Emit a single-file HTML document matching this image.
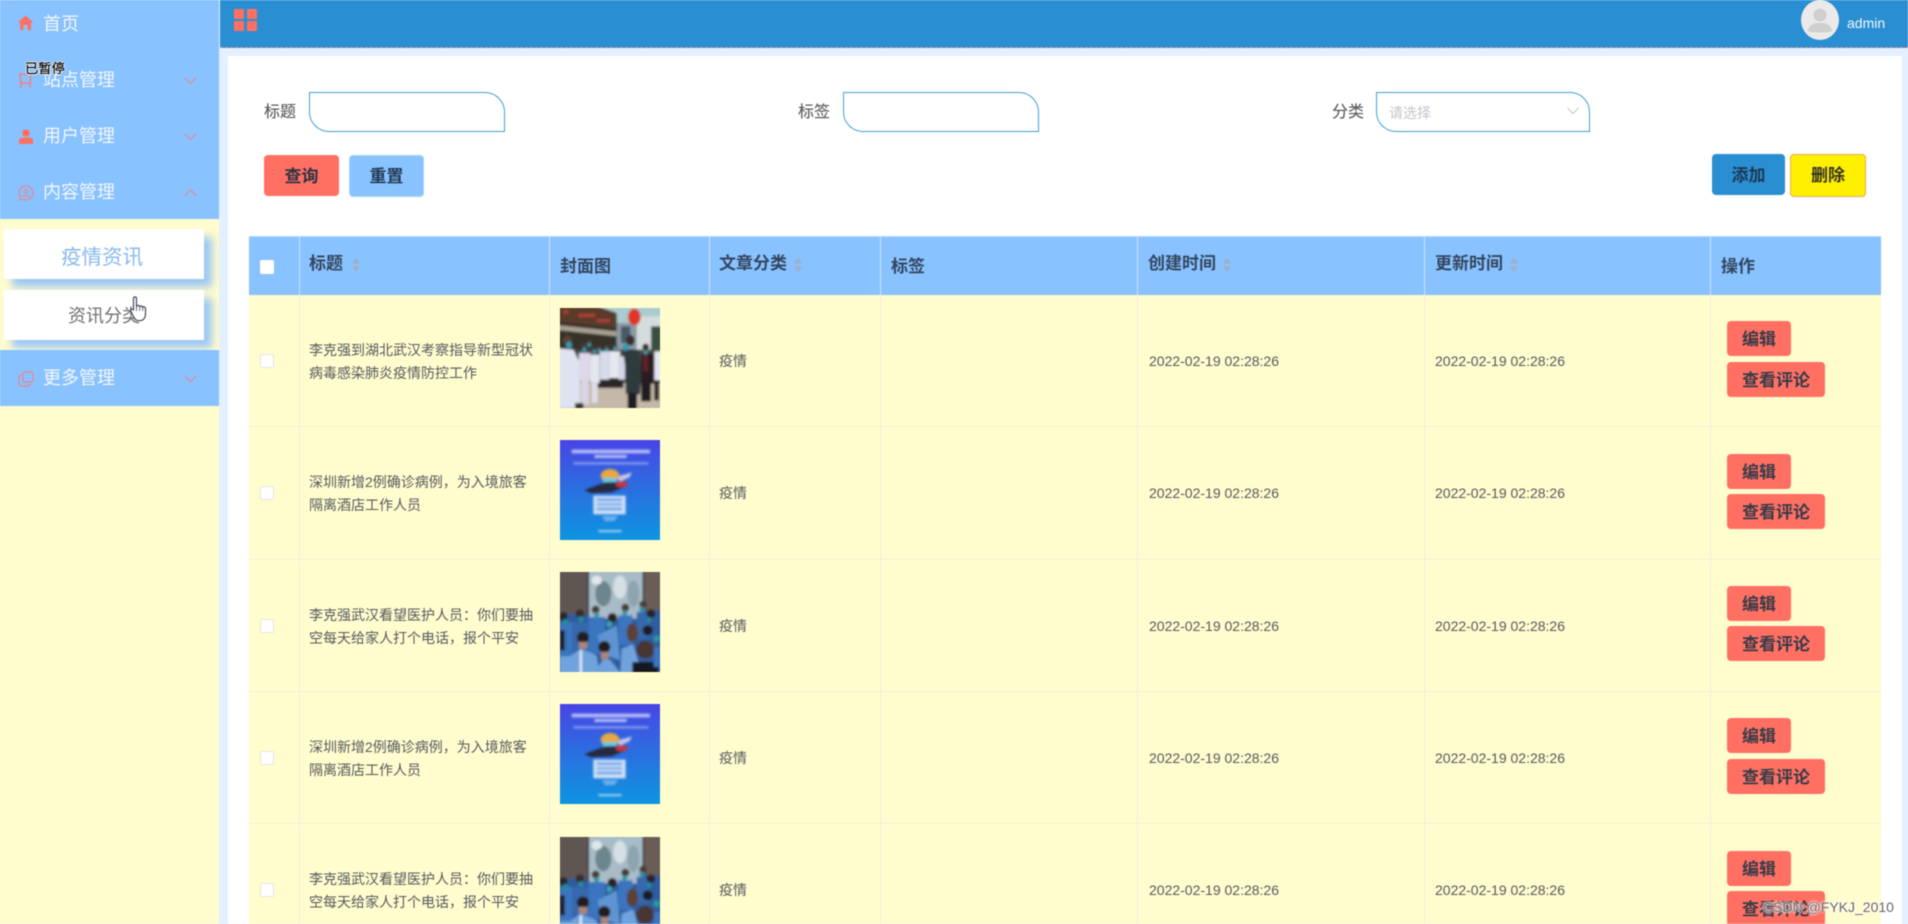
<!DOCTYPE html>
<html lang="zh-CN">
<head>
<meta charset="utf-8">
<title>内容管理</title>
<style>
html,body{margin:0;padding:0;width:1908px;height:924px;overflow:hidden;background:#e3f0ff}
*{box-sizing:border-box}
body{font-family:"Liberation Sans","Noto Sans CJK SC",sans-serif;color:#606266}
#root{position:absolute;left:0;top:0;width:1908px;height:924px;overflow:hidden;filter:blur(.4px)}
.a{position:absolute;white-space:nowrap}
#side{left:0;top:0;width:219px;height:924px;background:#fffcce}
.m{position:absolute;left:0;width:219px;height:56px;background:#88c2ff;color:#f4f7fb;font-size:18px;line-height:56px;padding-left:43px}
.m svg{position:absolute}
.sub{position:absolute;left:4px;width:200px;height:50px;background:#fff;text-align:center;box-shadow:8px 8px 8px #9cc7f5}
#head{left:220px;top:0;width:1688px;height:48px;background:#2a8fd2;border-bottom:1px dashed #c98a92}
#main{left:228px;top:56px;width:1674px;height:868px;background:#fff}
.lb{font-size:16px;line-height:24px;color:#54575c;-webkit-text-stroke:.1px #54575c}
.in{position:absolute;top:92px;height:40px;background:#fff;border:1.3px solid #3f9fd6;border-radius:0 20px 0 20px}
.btn{position:absolute;font-size:17px;font-weight:700;color:#2c3442;text-align:center;border-radius:4px}
.th{position:absolute;top:0;font-size:17px;font-weight:700;color:#344660;white-space:nowrap}
.row{position:absolute;left:0;width:1632px;height:132.3px;border-bottom:1px solid #f0efdc}
.row .c{position:absolute;font-size:14px;line-height:23px;color:#565a5e;white-space:nowrap}
.row svg{position:absolute;left:311px;top:12.6px}
.vl{position:absolute;top:0;width:1px;height:700px;background:#f0efdc}
.hl{position:absolute;top:0;width:1px;height:59px;background:#cfe3f7}
.ck{position:absolute;left:11px;width:14px;height:14px;background:#fff;border:1px solid #e4e6e0;border-radius:2px}
.e,.v{position:absolute;left:1478px;height:35px;background:#ff7063;border-radius:4px;font-size:17px;font-weight:700;color:#373b48;text-align:center;line-height:37px}
.e{top:26.4px;width:64px}
.v{top:66.7px;width:98px}
</style>
</head>
<body>
<svg width="0" height="0" style="position:absolute">
<defs>
<filter id="b" x="-10%" y="-10%" width="120%" height="120%"><feGaussianBlur stdDeviation="3.5"/></filter>
<linearGradient id="g2" x1="0" y1="0" x2="0" y2="1"><stop offset="0" stop-color="#4c40e6"/><stop offset=".5" stop-color="#2a70e0"/><stop offset="1" stop-color="#0a98e0"/></linearGradient>

<symbol id="i1" viewBox="15 15 300 300">
<g filter="url(#b)">
<rect x="0" y="0" width="330" height="330" fill="#c4b8a8"/>
<rect x="0" y="0" width="330" height="60" fill="#a8ccd0"/>
<rect x="240" y="40" width="90" height="100" fill="#d5dcdc"/>
<rect x="288" y="70" width="40" height="75" fill="#3a5040"/>
<rect x="185" y="60" width="60" height="85" fill="#8a9aa6"/>
<rect x="198" y="70" width="28" height="50" fill="#4a5a66"/>
<polygon points="0,0 185,38 185,145 0,145" fill="#35302a"/>
<polygon points="0,0 100,0 185,30 185,75 0,55" fill="#5a3a2a"/>
<rect x="25" y="22" width="15" height="10" fill="#b04038"/><rect x="70" y="32" width="50" height="10" fill="#b04038"/><rect x="125" y="48" width="40" height="10" fill="#a84038"/>
<polygon points="0,65 185,85 185,100 0,80" fill="#a8a090"/>
<ellipse cx="238" cy="42" rx="19" ry="25" fill="#e0352c"/>
<rect x="0" y="140" width="330" height="100" fill="#4a4844"/>
<rect x="125" y="225" width="80" height="30" fill="#2a2826"/>
<polygon points="0,135 55,140 75,180 75,300 60,315 0,315" fill="#dde3f0"/>
<rect x="72" y="150" width="34" height="85" fill="#dcd8e8"/><rect x="78" y="230" width="24" height="75" fill="#d8d4e2"/>
<rect x="106" y="155" width="28" height="85" fill="#e4e6f0"/><rect x="110" y="235" width="18" height="65" fill="#dcdce8"/>
<rect x="135" y="145" width="28" height="85" fill="#d6dcea"/>
<rect x="163" y="145" width="32" height="80" fill="#e6e8f0"/>
<rect x="190" y="160" width="20" height="70" fill="#d2d8e8"/>
<rect x="60" y="300" width="25" height="20" fill="#3a3532"/>
<circle cx="37" cy="112" r="14" fill="#5a4238"/><ellipse cx="42" cy="126" rx="9" ry="10" fill="#2f9db2"/>
<circle cx="88" cy="128" r="10" fill="#4a3a30"/><ellipse cx="88" cy="140" rx="6" ry="7" fill="#2f9db2"/>
<circle cx="103" cy="118" r="8" fill="#4a3a30"/><ellipse cx="103" cy="126" rx="5" ry="6" fill="#2f9db2"/>
<circle cx="118" cy="138" r="8" fill="#4a3a30"/><ellipse cx="118" cy="146" rx="5" ry="6" fill="#2f9db2"/>
<circle cx="133" cy="135" r="7" fill="#4a3a30"/><ellipse cx="133" cy="142" rx="5" ry="5" fill="#2f9db2"/>
<circle cx="155" cy="133" r="7" fill="#4a3a30"/><ellipse cx="155" cy="140" rx="5" ry="5" fill="#2f9db2"/>
<circle cx="180" cy="130" r="7" fill="#4a3a30"/><ellipse cx="180" cy="136" rx="5" ry="5" fill="#2f9db2"/>
<polygon points="205,150 225,138 250,142 260,200 255,275 212,272 212,200" fill="#2e3a3e"/>
<rect x="218" y="270" width="28" height="50" fill="#1c1a20"/>
<ellipse cx="226" cy="112" rx="13" ry="16" fill="#3a2e2a"/><ellipse cx="212" cy="132" rx="10" ry="10" fill="#2f9db2"/>
<rect x="258" y="152" width="40" height="90" fill="#2c1c20"/><rect x="264" y="155" width="16" height="50" fill="#5c2028"/>
<rect x="258" y="235" width="30" height="60" fill="#201c20"/>
<circle cx="272" cy="132" r="10" fill="#3a2e2a"/><ellipse cx="272" cy="148" rx="7" ry="6" fill="#2f9db2"/>
<rect x="298" y="145" width="30" height="88" fill="#e4e8f0"/><rect x="298" y="232" width="14" height="60" fill="#2a2220"/>
</g>
</symbol>

<symbol id="i2" viewBox="15 15 300 300">
<rect x="0" y="0" width="330" height="330" fill="url(#g2)"/>
<g filter="url(#b)">
<rect x="50" y="44" width="235" height="11" fill="#c8d0fa" opacity=".85"/>
<rect x="118" y="60" width="97" height="9" fill="#c8d0fa" opacity=".85"/>
<rect x="55" y="82" width="225" height="6" fill="#9eb0f6" opacity=".85"/>
<polygon points="185,125 232,112 222,128 195,140" fill="#c8c4e6"/>
<ellipse cx="165" cy="122" rx="28" ry="20" fill="#e8a840"/>
<rect x="143" y="128" width="42" height="14" rx="5" fill="#6fc8d8"/>
<polygon points="88,165 150,142 215,140 218,152 170,172 110,175" fill="#252a40"/>
<ellipse cx="200" cy="148" rx="18" ry="9" fill="#c8343c"/>
<rect x="115" y="182" width="97" height="56" fill="#cfe0f8"/>
<rect x="125" y="190" width="76" height="8" fill="#6fa4e8"/><rect x="125" y="204" width="76" height="8" fill="#7eaeea"/><rect x="125" y="218" width="76" height="8" fill="#6fa4e8"/>
<rect x="143" y="245" width="44" height="4" fill="#b4d4f6"/>
<rect x="148" y="253" width="32" height="4" fill="#b4d4f6"/>
<rect x="130" y="286" width="70" height="5" fill="#bfe0f8"/>
</g>
</symbol>

<symbol id="i3" viewBox="15 15 300 300">
<g filter="url(#b)">
<rect x="0" y="0" width="330" height="330" fill="#2f5d9e"/>
<rect x="0" y="0" width="102" height="140" fill="#5f5452"/>
<rect x="262" y="0" width="70" height="130" fill="#6a5c56"/>
<rect x="100" y="0" width="165" height="155" fill="#a8bcc8"/>
<rect x="98" y="0" width="4" height="150" fill="#1c1c1c"/><rect x="263" y="0" width="4" height="130" fill="#1c1c1c"/>
<ellipse cx="145" cy="80" rx="24" ry="38" fill="#6d858c"/>
<ellipse cx="195" cy="60" rx="20" ry="35" fill="#d4e0e4"/>
<ellipse cx="235" cy="80" rx="18" ry="40" fill="#8ea4ae"/>
<ellipse cx="125" cy="40" rx="16" ry="14" fill="#dfe8ec"/>
<rect x="15" y="165" width="40" height="110" fill="#3a74c0"/>
<rect x="52" y="165" width="46" height="100" fill="#3567ac"/>
<rect x="100" y="150" width="50" height="110" fill="#3a74c0"/>
<polygon points="128,205 185,175 195,280 140,260" fill="#5f94d2"/>
<rect x="190" y="145" width="42" height="90" fill="#3a74c0"/>
<rect x="245" y="135" width="40" height="80" fill="#3567ac"/>
<rect x="285" y="160" width="45" height="100" fill="#2f5d9e"/>
<circle cx="25" cy="148" r="13" fill="#2e2624"/><ellipse cx="32" cy="165" rx="9" ry="9" fill="#1f8f9a"/>
<circle cx="75" cy="140" r="13" fill="#3a2c26"/><ellipse cx="78" cy="156" rx="8" ry="8" fill="#1f8f9a"/>
<circle cx="122" cy="128" r="12" fill="#4a3a34"/><ellipse cx="125" cy="143" rx="8" ry="8" fill="#2a9aa4"/>
<circle cx="172" cy="152" r="14" fill="#2a2220"/><ellipse cx="163" cy="171" rx="8" ry="9" fill="#39a7b4"/>
<circle cx="211" cy="122" r="12" fill="#4a3a34"/><ellipse cx="209" cy="138" rx="8" ry="8" fill="#2a9aa4"/>
<circle cx="264" cy="112" r="11" fill="#4a3a34"/><ellipse cx="260" cy="127" rx="8" ry="8" fill="#2a9aa4"/>
<circle cx="288" cy="140" r="13" fill="#2a2220"/><ellipse cx="282" cy="158" rx="7" ry="7" fill="#1f8f9a"/>
<circle cx="305" cy="215" r="10" fill="#2a9aa4"/>
<rect x="15" y="190" width="14" height="60" fill="#241e1c"/>
<rect x="15" y="268" width="36" height="52" fill="#6fa3de"/>
<polygon points="48,265 78,245 125,265 132,320 45,320" fill="#6fa3de"/>
<rect x="74" y="250" width="7" height="70" fill="#e4edf8"/>
<circle cx="84" cy="212" r="18" fill="#241e1c"/><rect x="72" y="225" width="25" height="20" fill="#ac8676"/>
<polygon points="112,320 145,278 165,278 198,320" fill="#6fa3de"/>
<circle cx="148" cy="240" r="18" fill="#241e1c"/><rect x="138" y="255" width="22" height="22" fill="#ac8676"/>
<polygon points="196,320 200,245 235,232 250,285 235,320" fill="#6fa3de"/>
<ellipse cx="232" cy="197" rx="17" ry="28" fill="#5a4238"/>
<circle cx="278" cy="190" r="15" fill="#1e1c24"/>
<circle cx="271" cy="248" r="27" fill="#4a3630"/>
<rect x="232" y="285" width="78" height="35" fill="#17161e"/>
<rect x="296" y="240" width="20" height="60" fill="#3a74c0"/>
</g>
</symbol>

<symbol id="caret" viewBox="0 0 8 14">
<polygon points="4,0 8,5.5 0,5.5" fill="#a0afc4"/><polygon points="4,14 8,8.5 0,8.5" fill="#a0afc4"/>
</symbol>
</defs>
</svg>
<div id="root">

<div class="a" id="head">
  <svg style="position:absolute;left:14px;top:9px" width="23" height="22"><g fill="#ff7063"><rect width="10" height="10" rx="1"/><rect x="13" width="10" height="10" rx="1"/><rect y="12" width="10" height="10" rx="1"/><rect x="13" y="12" width="10" height="10" rx="1"/></g></svg>
  <svg style="position:absolute;left:1581px;top:0" width="38" height="40"><ellipse cx="19" cy="20" rx="19" ry="20" fill="#eaeaea"/><circle cx="19" cy="15" r="6.500" fill="#cfcfcf"/><path d="M7 31c1-7 7-8 12-8s11 1 12 8c-3 2-21 2-24 0z" fill="#cfcfcf"/></svg>
  <div class="a" style="left:1627px;top:15px;font-size:14px;line-height:17px;color:#f2f8fc">admin</div>
</div>

<div class="a" id="main"></div>

<div class="a" id="side">
  <div class="m" style="top:-4px">首页<svg style="left:18px;top:19px" width="15" height="15" viewBox="0 0 15 15"><path d="M7.500 .5L15 7.500h-2V15H9.500v-5h-4v5H2V7.500H0z" fill="#ff7063"/></svg></div>
  <div class="m" style="top:52px">站点管理<svg style="left:18px;top:21px" width="15" height="17" viewBox="0 0 15 17"><path d="M1 1h13M2.500 1v9h10V1M4 10l-1.500 5M11 10l1.500 5" fill="none" stroke="#f0808a" stroke-width="1.500"/></svg><svg style="left:184px;top:25px" width="13" height="8"><path d="M.5.500l6 6 6-6" fill="none" stroke="#f07f86" stroke-width="1"/></svg></div>
  <div class="m" style="top:108px">用户管理<svg style="left:19px;top:21px" width="14" height="15" viewBox="0 0 14 15"><circle cx="7" cy="4" r="3.800" fill="#ff7063"/><path d="M0 15v-3c0-3 2-3.500 7-3.500s7 .5 7 3.500v3z" fill="#ff7063"/></svg><svg style="left:184px;top:25px" width="13" height="8"><path d="M.5.500l6 6 6-6" fill="none" stroke="#f07f86" stroke-width="1"/></svg></div>
  <div class="m" style="top:164px;height:55px">内容管理<svg style="left:18px;top:21px" width="16" height="16" viewBox="0 0 16 16"><path d="M8 1a7 7 0 1 1-3 13.300L1.500 15l.8-3A7 7 0 0 1 8 1z" fill="none" stroke="#f0808a" stroke-width="1.100"/><circle cx="8" cy="6.500" r="1.800" fill="none" stroke="#f0808a"/><path d="M4.500 11h7" stroke="#f0808a" stroke-width="1.200"/></svg><svg style="left:184px;top:25px" width="13" height="8"><path d="M.5 7l6-6 6 6" fill="none" stroke="#f07f86" stroke-width="1"/></svg></div>
  <div class="sub" style="top:229px;font-size:20.500px;line-height:57px;color:#88b9ee"><span style="position:relative;left:-2px">疫情资讯</span></div>
  <div class="sub" style="top:290px;font-size:18px;line-height:52px;color:#6e7074">资讯分类</div>
  <div class="m" style="top:350px">更多管理<svg style="left:18px;top:21px" width="16" height="16" viewBox="0 0 16 16"><rect x="5" y="1" width="10" height="10" rx="2" fill="none" stroke="#f0808a" stroke-width="1.200"/><path d="M3.500 4H3a2 2 0 0 0-2 2v7a2 2 0 0 0 2 2h7a2 2 0 0 0 2-2v-.5" fill="none" stroke="#f0808a" stroke-width="1.200"/></svg><svg style="left:184px;top:25px" width="13" height="8"><path d="M.5.500l6 6 6-6" fill="none" stroke="#f07f86" stroke-width="1"/></svg></div>
</div>

<div class="a" style="left:25px;top:60px;font-size:13.300px;line-height:17px;color:#000;-webkit-text-stroke:.25px #000;text-shadow:1px 0 #fff,-1px 0 #fff,0 1px #fff,0 -1px #fff">已暂停</div>

<svg class="a" style="left:130px;top:296px" width="17" height="26" viewBox="0 0 17 26"><path d="M3.500 2.500c0-2 3-2 3 0v8c.5-1.500 3-1.500 3.200.3.500-1.300 2.800-1.100 3 .7.600-1 2.800-.8 2.800 1.200v5c0 4-2 7-6 7-3 0-4.500-1-6-4L.8 15c-.8-1.500 1-2.800 2.700-1z" fill="#fff" stroke="#444b55" stroke-width="1.200" stroke-linejoin="round"/><path d="M6.500 10v5M9.700 11v4M12.700 12v3" stroke="#444b55" stroke-width=".8"/></svg>

<div class="a lb" style="left:264px;top:101px">标题</div>
<div class="in" style="left:309px;width:196px"></div>
<div class="a lb" style="left:798px;top:101px">标签</div>
<div class="in" style="left:843px;width:196px"></div>
<div class="a lb" style="left:1332px;top:101px">分类</div>
<div class="in" style="left:1376px;width:214px"></div>
<div class="a" style="left:1389px;top:101px;font-size:14px;line-height:24px;color:#c0c4cc">请选择</div>
<svg class="a" style="left:1567px;top:107px" width="12" height="8"><path d="M.5 1l5.500 5.500L11.500 1" fill="none" stroke="#c0c4cc" stroke-width="1"/></svg>

<div class="btn" style="left:264px;top:155px;width:75px;height:41px;line-height:43px;background:#ff7063">查询</div>
<div class="btn" style="left:349px;top:155px;width:75px;height:42px;line-height:42px;background:#88c2ff;border:1px solid #a8d0fa;color:#243a56">重置</div>
<div class="btn" style="left:1712px;top:154px;width:73px;height:41px;line-height:43px;background:#2a8fd2;color:#1d3854">添加</div>
<div class="btn" style="left:1790px;top:154px;width:76px;height:43px;line-height:42px;background:#fff000;border:1px solid #e8a850;color:#33332a">删除</div>

<div class="a" style="left:249px;top:236px;width:1632px;height:700px;background:#fffcce">
  <div class="a" style="left:0;top:0;width:1632px;height:59px;background:#88c2ff;border-top:1px solid #b5d8fb"></div>
  <div class="vl" style="left:50px"></div><div class="vl" style="left:300px"></div><div class="vl" style="left:460px"></div><div class="vl" style="left:631px"></div><div class="vl" style="left:888px"></div><div class="vl" style="left:1175px"></div><div class="vl" style="left:1461px"></div>
  <div class="hl" style="left:50px"></div><div class="hl" style="left:300px"></div><div class="hl" style="left:460px"></div><div class="hl" style="left:631px"></div><div class="hl" style="left:888px"></div><div class="hl" style="left:1175px"></div><div class="hl" style="left:1461px"></div>
  <div class="a" style="left:11px;top:24px;width:14px;height:14px;background:#fff;border-radius:2px"></div>

  <div class="th" style="left:60px;top:16px;line-height:24px">标题<svg style="position:absolute;left:43px;top:6px" width="8" height="14"><use href="#caret"/></svg></div>
  <div class="th" style="left:311px;top:19px;line-height:24px">封面图</div>
  <div class="th" style="left:470px;top:16px;line-height:24px">文章分类<svg style="position:absolute;left:75px;top:6px" width="8" height="14"><use href="#caret"/></svg></div>
  <div class="th" style="left:642px;top:19px;line-height:24px">标签</div>
  <div class="th" style="left:899px;top:16px;line-height:24px">创建时间<svg style="position:absolute;left:75px;top:6px" width="8" height="14"><use href="#caret"/></svg></div>
  <div class="th" style="left:1186px;top:16px;line-height:24px">更新时间<svg style="position:absolute;left:75px;top:6px" width="8" height="14"><use href="#caret"/></svg></div>
  <div class="th" style="left:1472px;top:19px;line-height:24px">操作</div>

  <div class="row" style="top:59px">
    <div class="ck" style="top:59px"></div>
    <div class="c" style="left:60px;top:44px">李克强到湖北武汉考察指导新型冠状<br>病毒感染肺炎疫情防控工作</div>
    <svg width="100" height="100"><use href="#i1"/></svg>
    <div class="c" style="left:470px;top:55px">疫情</div>
    <div class="c" style="left:900px;top:55px">2022-02-19 02:28:26</div>
    <div class="c" style="left:1186px;top:55px">2022-02-19 02:28:26</div>
    <div class="e">编辑</div><div class="v">查看评论</div>
  </div>
  <div class="row" style="top:191.300px">
    <div class="ck" style="top:59px"></div>
    <div class="c" style="left:60px;top:44px">深圳新增2例确诊病例，为入境旅客<br>隔离酒店工作人员</div>
    <svg width="100" height="100"><use href="#i2"/></svg>
    <div class="c" style="left:470px;top:55px">疫情</div>
    <div class="c" style="left:900px;top:55px">2022-02-19 02:28:26</div>
    <div class="c" style="left:1186px;top:55px">2022-02-19 02:28:26</div>
    <div class="e">编辑</div><div class="v">查看评论</div>
  </div>
  <div class="row" style="top:323.600px">
    <div class="ck" style="top:59px"></div>
    <div class="c" style="left:60px;top:44px">李克强武汉看望医护人员：你们要抽<br>空每天给家人打个电话，报个平安</div>
    <svg width="100" height="100"><use href="#i3"/></svg>
    <div class="c" style="left:470px;top:55px">疫情</div>
    <div class="c" style="left:900px;top:55px">2022-02-19 02:28:26</div>
    <div class="c" style="left:1186px;top:55px">2022-02-19 02:28:26</div>
    <div class="e">编辑</div><div class="v">查看评论</div>
  </div>
  <div class="row" style="top:455.900px">
    <div class="ck" style="top:59px"></div>
    <div class="c" style="left:60px;top:44px">深圳新增2例确诊病例，为入境旅客<br>隔离酒店工作人员</div>
    <svg width="100" height="100"><use href="#i2"/></svg>
    <div class="c" style="left:470px;top:55px">疫情</div>
    <div class="c" style="left:900px;top:55px">2022-02-19 02:28:26</div>
    <div class="c" style="left:1186px;top:55px">2022-02-19 02:28:26</div>
    <div class="e">编辑</div><div class="v">查看评论</div>
  </div>
  <div class="row" style="top:588.200px">
    <div class="ck" style="top:59px"></div>
    <div class="c" style="left:60px;top:44px">李克强武汉看望医护人员：你们要抽<br>空每天给家人打个电话，报个平安</div>
    <svg width="100" height="100"><use href="#i3"/></svg>
    <div class="c" style="left:470px;top:55px">疫情</div>
    <div class="c" style="left:900px;top:55px">2022-02-19 02:28:26</div>
    <div class="c" style="left:1186px;top:55px">2022-02-19 02:28:26</div>
    <div class="e">编辑</div><div class="v">查看评论</div>
  </div>
</div>

<div class="a" style="left:1763px;top:898px;font-size:14px;line-height:18px;color:rgba(85,85,85,.9);text-shadow:0 0 1px #fff,0 0 1px #fff,0 0 2px #fff,0 0 3px rgba(255,255,255,.9)">CSDN @FYKJ_2010</div>

</div>
</body>
</html>
